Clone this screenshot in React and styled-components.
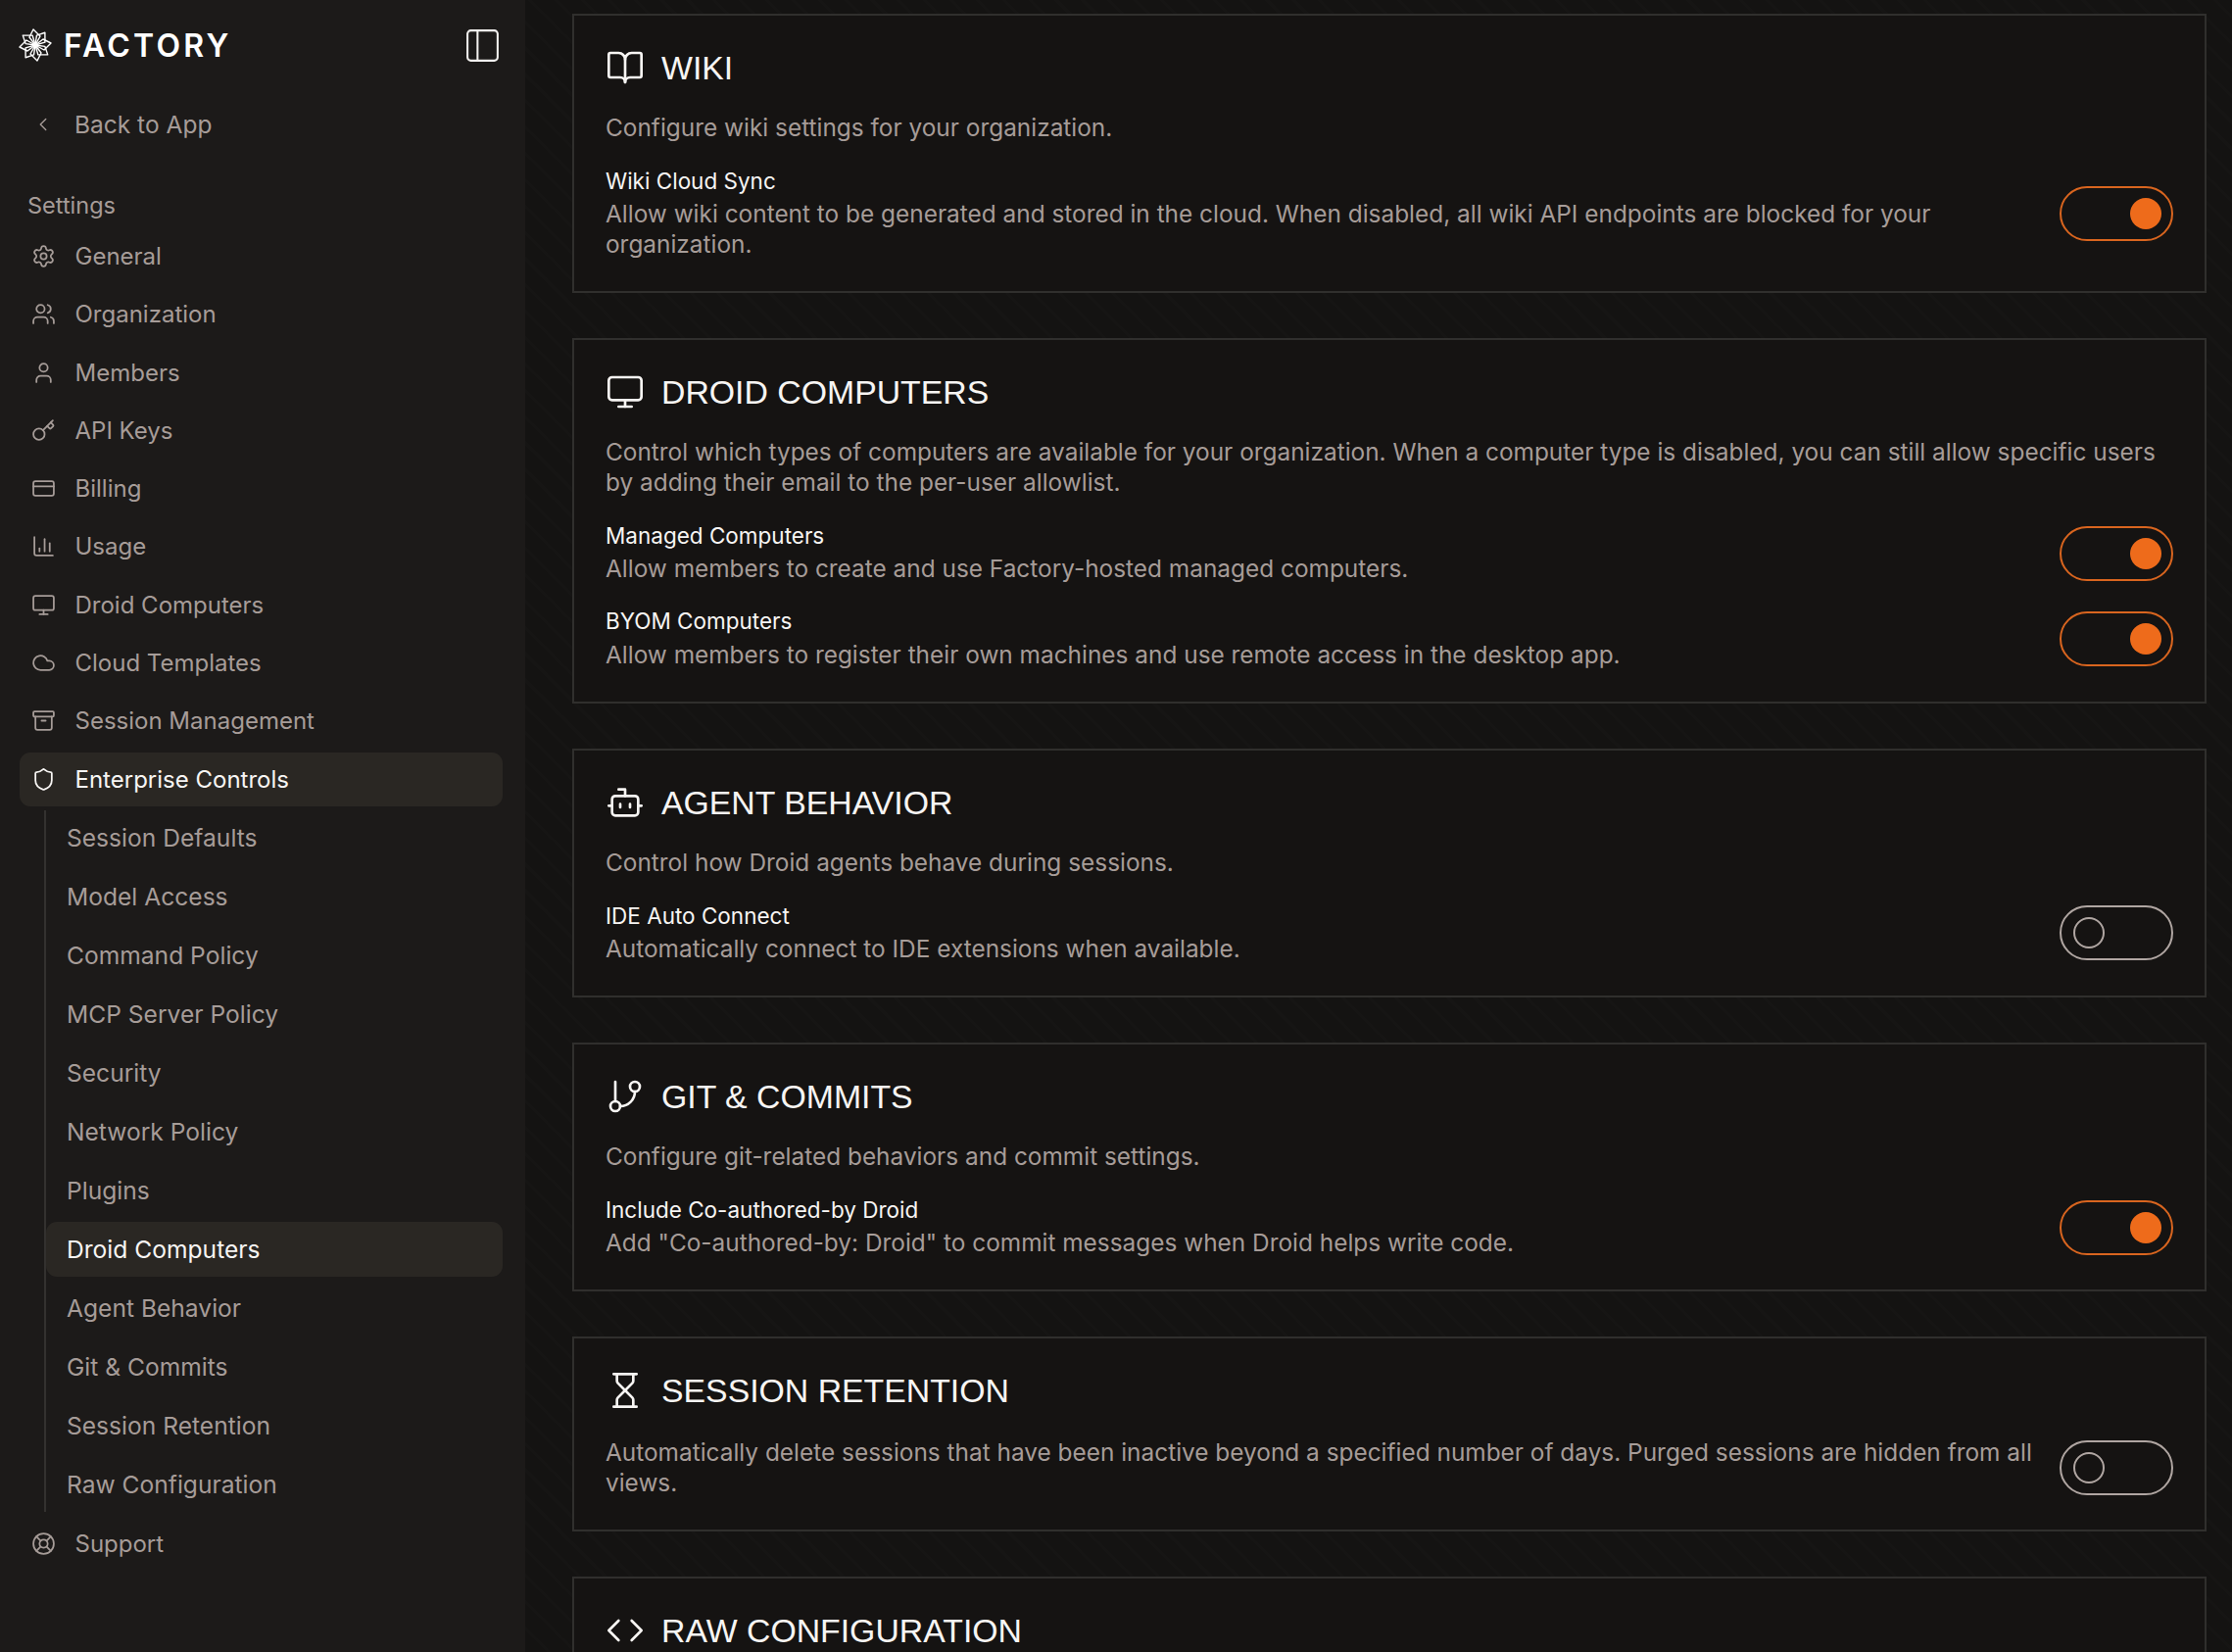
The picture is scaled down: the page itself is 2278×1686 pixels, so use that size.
import { createGlobalStyle, styled } from 'styled-components';
import {
  Archive, Bot, BookOpen, ChartColumn, ChevronLeft, Cloud, Code, CreditCard, GitBranch, Hourglass,
  Key, LifeBuoy, Monitor, PanelLeft, Settings, Shield, User, Users,
} from 'lucide-react';

const GlobalStyle = createGlobalStyle`
  html, body {
    margin: 0;
    height: 100%;
    overflow: hidden;
    background: #141312;
  }
  * { box-sizing: border-box; }
  body { font-family: Inter, "Liberation Sans", Arial, sans-serif; }
`;

const Page = styled.div`
  display: flex;
  height: 1686px;
  overflow: hidden;
`;

const Sidebar = styled.aside`
  flex: 0 0 536px;
  background: #1c1a19;
  padding: 20px 23px 0 20px;
  color: #a69c98;
  font-size: 24px;
`;

const Brand = styled.div`
  display: flex;
  align-items: center;
  justify-content: space-between;
  height: 52px;
`;

const Logo = styled.div`
  display: flex;
  align-items: center;
  gap: 12px;
  margin-left: -1px;
  color: #fff;
  font-size: 32px;
  font-weight: 600;
  letter-spacing: 3.2px;
`;

const CollapseButton = styled.div`
  display: flex;
  color: #f4f2f0;
`;

const BackRow = styled.div`
  display: flex;
  align-items: center;
  height: 55px;
  margin-top: 27px;
  padding-left: 11px;
  gap: 20px;
  font-size: 24.5px;
`;

const BackIcon = styled.span`
  display: flex;
  width: 25px;
  justify-content: center;
`;

const SectionLabel = styled.div`
  margin: 40px 0 0 8px;
  font-size: 23.5px;
  line-height: 31px;
  height: 31px;
`;

const NavList = styled.nav`
  display: flex;
  flex-direction: column;
  gap: 4.3px;
  margin-top: 9px;
`;

const NavRow = styled.div`
  display: flex;
  align-items: center;
  height: 55px;
  padding-left: 11.5px;
  gap: 20px;
  border-radius: 11px;
  color: ${(p) => (p.$active ? '#f7f5f3' : '#a69c98')};
  background: ${(p) => (p.$active ? '#2a2723' : 'transparent')};
`;

const SubList = styled.div`
  display: flex;
  flex-direction: column;
  gap: 4.05px;
  margin-left: 25px;
  border-left: 2px solid #33312f;
`;

const SubRow = styled.div`
  display: flex;
  align-items: center;
  height: 56px;
  padding-left: 21px;
  border-radius: 11px;
  font-size: 24.6px;
  color: ${(p) => (p.$active ? '#f7f5f3' : '#a69c98')};
  background: ${(p) => (p.$active ? '#2a2723' : 'transparent')};
`;

const Main = styled.main`
  flex: 1;
  min-width: 0;
  display: flex;
  flex-direction: column;
  gap: 46px;
  padding: 14px 26px 0 48px;
  background: repeating-linear-gradient(45deg, #141312 0 16px, #161514 16px 19px);
`;

const Card = styled.section`
  flex: none;
  background: #151312;
  border: 2px solid #302f2d;
  padding: 33px 32px 32px;
`;

const CardTitle = styled.h2`
  display: flex;
  align-items: center;
  gap: 17px;
  margin: 0;
  height: 40px;
  color: #f7f5f3;
  font-family: "Liberation Sans", Arial, sans-serif;
  font-size: 33.8px;
  font-weight: 400;
  line-height: 40px;
`;

const Description = styled.p`
  margin: 25.7px 0 0;
  color: #a69c98;
  font-size: 24.4px;
  line-height: 31px;
`;

const Row = styled.div`
  display: flex;
  align-items: center;
  justify-content: space-between;
  gap: 16px;
  margin-top: ${(p) => (p.$flush ? '28px' : '23px')};

  & + & {
    margin-top: 22.1px;
  }
`;

const RowText = styled.div`
  flex: 1;
  min-width: 0;
`;

const RowLabel = styled.div`
  color: #f7f5f3;
  font-size: 22.5px;
  line-height: 31px;
  margin-bottom: 3.5px;
`;

const RowHint = styled.div`
  color: #a69c98;
  font-size: 24.4px;
  line-height: 31px;
`;

const Toggle = styled.div`
  flex: none;
  display: flex;
  align-items: center;
  justify-content: ${(p) => (p.$on ? 'flex-end' : 'flex-start')};
  width: 116px;
  height: 56px;
  margin-top: ${(p) => (p.$nudge ? '2px' : '0')};
  padding: 0 10px 0 12px;
  border: 2px solid ${(p) => (p.$on ? '#d9651f' : '#b0a6a2')};
  border-radius: 28px;
`;

const Knob = styled.span`
  display: block;
  width: 32px;
  height: 32px;
  border-radius: 50%;
  background: ${(p) => (p.$on ? '#ee6b1b' : 'transparent')};
  border: ${(p) => (p.$on ? 'none' : '2px solid #b0a6a2')};
`;

const FactoryMark = () => (
  <svg width="34" height="34" viewBox="0 0 34 34" fill="none" stroke="currentColor" strokeWidth="1.4" strokeLinejoin="round">
    {[0, 45, 90, 135, 180, 225, 270, 315].map((angle) => (
      <path key={angle} d="M17 17 L11 9 L15 1 L22 8 Z" transform={`rotate(${angle} 17 17)`} />
    ))}
  </svg>
);

const navItems = [
  { icon: Settings, label: 'General' },
  { icon: Users, label: 'Organization' },
  { icon: User, label: 'Members' },
  { icon: Key, label: 'API Keys' },
  { icon: CreditCard, label: 'Billing' },
  { icon: ChartColumn, label: 'Usage' },
  { icon: Monitor, label: 'Droid Computers' },
  { icon: Cloud, label: 'Cloud Templates' },
  { icon: Archive, label: 'Session Management' },
];

const subItems = [
  'Session Defaults', 'Model Access', 'Command Policy', 'MCP Server Policy', 'Security', 'Network Policy',
  'Plugins', 'Droid Computers', 'Agent Behavior', 'Git & Commits', 'Session Retention', 'Raw Configuration',
];

const Setting = ({ label, hint, on, flush }) => (
  <Row $flush={flush}>
    <RowText>
      <RowLabel>{label}</RowLabel>
      <RowHint>{hint}</RowHint>
    </RowText>
    <Toggle $on={on} $nudge><Knob $on={on} /></Toggle>
  </Row>
);

const App = () => (
  <Page>
    <GlobalStyle />
    <Sidebar>
      <Brand>
        <Logo><FactoryMark />FACTORY</Logo>
        <CollapseButton><PanelLeft size={41} strokeWidth={1.2} /></CollapseButton>
      </Brand>
      <BackRow><BackIcon><ChevronLeft size={22} strokeWidth={1.5} /></BackIcon>Back to App</BackRow>
      <SectionLabel>Settings</SectionLabel>
      <NavList>
        {navItems.map(({ icon: Icon, label }) => (
          <NavRow key={label}><Icon size={25} strokeWidth={1.7} />{label}</NavRow>
        ))}
        <NavRow $active><Shield size={25} strokeWidth={1.7} />Enterprise Controls</NavRow>
        <SubList>
          {subItems.map((label, i) => (
            <SubRow key={label + i} $active={i === 7}>{label}</SubRow>
          ))}
        </SubList>
        <NavRow><LifeBuoy size={25} strokeWidth={1.7} />Support</NavRow>
      </NavList>
    </Sidebar>
    <Main>
      <Card>
        <CardTitle><BookOpen size={40} strokeWidth={1.6} />WIKI</CardTitle>
        <Description>Configure wiki settings for your organization.</Description>
        <Setting
          on
          label="Wiki Cloud Sync"
          hint="Allow wiki content to be generated and stored in the cloud. When disabled, all wiki API endpoints are blocked for your organization."
        />
      </Card>
      <Card>
        <CardTitle><Monitor size={40} strokeWidth={1.6} />DROID COMPUTERS</CardTitle>
        <Description>Control which types of computers are available for your organization. When a computer type is disabled, you can still allow specific users by adding their email to the per-user allowlist.</Description>
        <Setting on label="Managed Computers" hint="Allow members to create and use Factory-hosted managed computers." />
        <Setting on label="BYOM Computers" hint="Allow members to register their own machines and use remote access in the desktop app." />
      </Card>
      <Card>
        <CardTitle><Bot size={40} strokeWidth={1.6} />AGENT BEHAVIOR</CardTitle>
        <Description>Control how Droid agents behave during sessions.</Description>
        <Setting label="IDE Auto Connect" hint="Automatically connect to IDE extensions when available." />
      </Card>
      <Card>
        <CardTitle><GitBranch size={40} strokeWidth={1.6} />GIT &amp; COMMITS</CardTitle>
        <Description>Configure git-related behaviors and commit settings.</Description>
        <Setting on label="Include Co-authored-by Droid" hint={'Add "Co-authored-by: Droid" to commit messages when Droid helps write code.'} />
      </Card>
      <Card>
        <CardTitle><Hourglass size={40} strokeWidth={1.6} />SESSION RETENTION</CardTitle>
        <Row $flush>
          <RowHint>Automatically delete sessions that have been inactive beyond a specified number of days. Purged sessions are hidden from all views.</RowHint>
          <Toggle><Knob /></Toggle>
        </Row>
      </Card>
      <Card>
        <CardTitle><Code size={40} strokeWidth={1.6} />RAW CONFIGURATION</CardTitle>
      </Card>
    </Main>
  </Page>
);

export default App;
